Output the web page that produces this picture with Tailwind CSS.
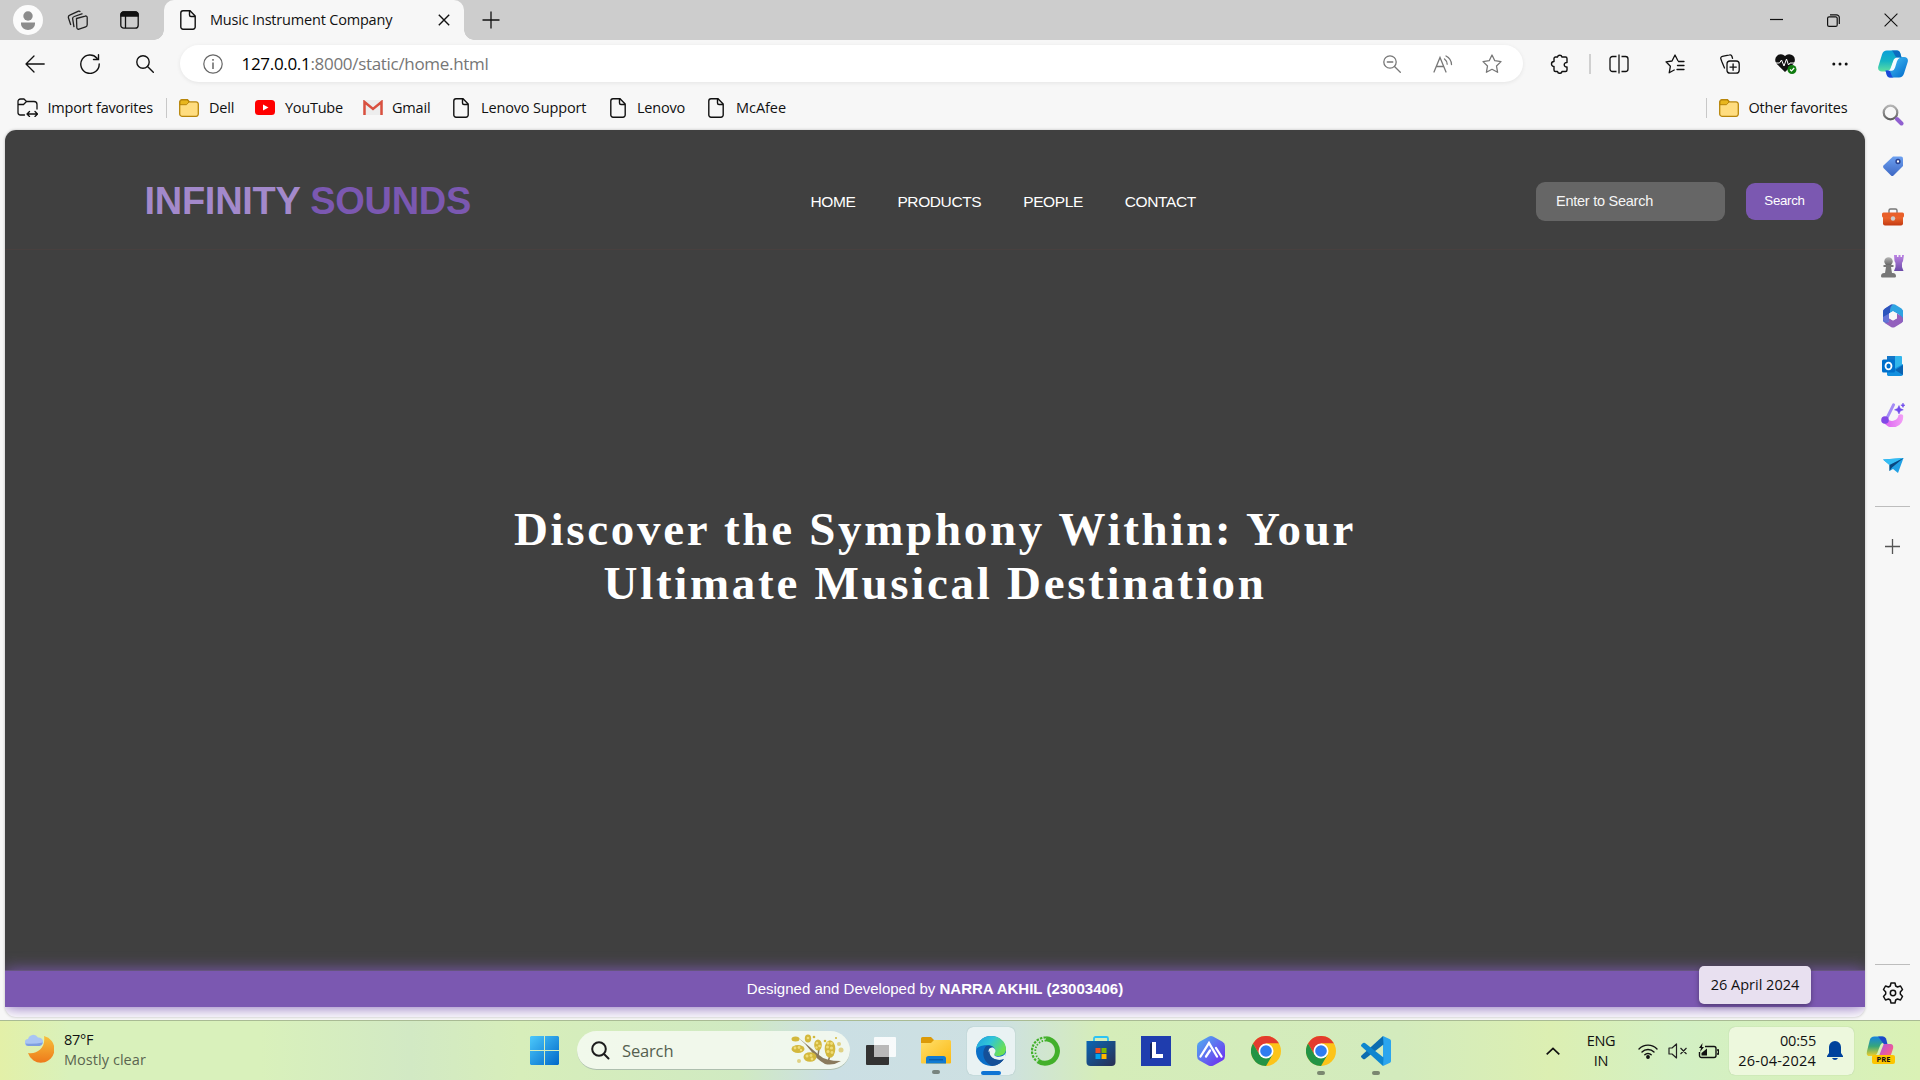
<!DOCTYPE html>
<html lang="en">
<head>
<meta charset="utf-8">
<title>Music Instrument Company</title>
<script src="https://cdn.jsdelivr.net/npm/@tailwindcss/browser@4"></script>
</head>
<body class="w-[1920px] h-[1080px] overflow-hidden bg-[#f7f7f7] font-['Open_Sans',sans-serif] text-[#111] flex flex-col">
<svg class="absolute size-0">
  <defs>
    <linearGradient id="blue" x1="0" y1="0" x2="1" y2="1"><stop offset="0" stop-color="#4cc9fb"/><stop offset="1" stop-color="#0068c9"/></linearGradient>
    <linearGradient id="purple" x1="0" y1="0" x2="0" y2="1"><stop offset="0" stop-color="#bd84e4"/><stop offset="1" stop-color="#6b4ba8"/></linearGradient>
    <linearGradient id="grey" x1="0" y1="0" x2="0" y2="1"><stop offset="0" stop-color="#b5b5b5"/><stop offset="1" stop-color="#606060"/></linearGradient>
    <linearGradient id="tag" x1="0" y1="0" x2="0" y2="1"><stop offset="0" stop-color="#6ca0f0"/><stop offset="1" stop-color="#3e68c4"/></linearGradient>
    <linearGradient id="red" x1="0" y1="0" x2="0" y2="1"><stop offset="0" stop-color="#ee6a30"/><stop offset="1" stop-color="#c43a12"/></linearGradient>
    <linearGradient id="moon" x1="0" y1="0" x2="0" y2="1"><stop offset="0" stop-color="#f7c13b"/><stop offset="1" stop-color="#ee7a1b"/></linearGradient>
    <linearGradient id="teal" x1="0" y1="0" x2="0" y2="1"><stop offset="0" stop-color="#0a9fd8"/><stop offset=".5" stop-color="#15b4c4"/><stop offset="1" stop-color="#5fe0a0"/></linearGradient>
    <linearGradient id="pink" x1="0" y1="0" x2="1" y2="0"><stop offset="0" stop-color="#d85cf0"/><stop offset="1" stop-color="#f3a0f6"/></linearGradient>
    <linearGradient id="edge" x1="0" y1="0" x2="1" y2=".5"><stop offset="0" stop-color="#1f9fe0"/><stop offset=".5" stop-color="#30c5d8"/><stop offset="1" stop-color="#6be052"/></linearGradient>
    <linearGradient id="file" x1="0" y1="0" x2="1" y2="1"><stop offset="0" stop-color="#ffdf6b"/><stop offset="1" stop-color="#fbb913"/></linearGradient>
    <linearGradient id="bag" x1="0" y1="0" x2="1" y2="1"><stop offset="0" stop-color="#0a66b4"/><stop offset="1" stop-color="#2a2f52"/></linearGradient>
    <linearGradient id="hex" x1="0" y1="0" x2="1" y2="1"><stop offset="0" stop-color="#4fb4f0"/><stop offset="1" stop-color="#7024f0"/></linearGradient>
    <linearGradient id="rain" x1="0" y1="0" x2="0" y2="1"><stop offset="0" stop-color="#1683e0"/><stop offset=".5" stop-color="#37a67a"/><stop offset="1" stop-color="#f2cf2a"/></linearGradient>
    <linearGradient id="sun" x1="0" y1="0" x2="1" y2="1"><stop offset="0" stop-color="#a455e8"/><stop offset=".6" stop-color="#ee5a9a"/><stop offset="1" stop-color="#fb8a4a"/></linearGradient>
    <symbol id="doc" viewBox="0 0 16 20"><path d="M3 .8h7L15.200 6v11a2.200 2.200 0 0 1-2.200 2.200H3A2.200 2.200 0 0 1 .8 17V3A2.200 2.200 0 0 1 3 .8zM9.500 1v4A1.500 1.500 0 0 0 11 6.500h4" fill="none" stroke="#111" stroke-width="1.400"/></symbol>
    <symbol id="folder" viewBox="0 0 20 18"><path d="M.7 3v12A2.200 2.200 0 0 0 3 17.300h14a2.200 2.200 0 0 0 2.300-2.200V5A2.200 2.200 0 0 0 17 2.900h-6.500L8.500.7H3A2.200 2.200 0 0 0 .7 3z" fill="#ffdd80" stroke="#b8860b" stroke-width="1.300"/><path d="M1 5.700h6.500L10 3 8.200 1H3A2 2 0 0 0 1 3z" fill="#e8b61e" stroke="#b8860b"/></symbol>
    <symbol id="chrome" viewBox="0 0 30 30"><circle cx="15" cy="15" r="15" fill="#fcc419"/><path d="M2 7.500A15 15 0 0 1 28 7.500H15L8.500 18.800z" fill="#e33b2e"/><path d="M2 7.500A15 15 0 0 0 15 30l6.500-11.200H8.500z" fill="#239445"/><path d="M15 7.500h13L21.500 18.800z" fill="#fcc419"/><circle cx="15" cy="15" r="7.500" fill="#fff"/><circle cx="15" cy="15" r="5.800" fill="#2f7cf0"/></symbol>
  </defs>
</svg>

<!-- Tab strip -->
<header class="h-10 shrink-0 bg-[#cdcdcd] flex items-center">
  <div class="w-[164px] h-10 flex items-center pl-[13px] shrink-0">
    <svg class="size-[30px]" viewBox="0 0 30 30"><circle cx="15" cy="15" r="15" fill="#fbfbfb"/><circle cx="15" cy="11" r="4.700" fill="#8c8c8c"/><path d="M8 17.500h14v1.500a7 6 0 0 1-14 0z" fill="#8c8c8c"/></svg>
    <svg class="ml-6 w-[21px] h-5" viewBox="0 0 21 20" fill="none" stroke="#222" stroke-width="1.300" stroke-linejoin="round"><path d="m9.500 8.500 8.700-2.400a1.500 1.500 0 0 1 2 1.400v7.300a2.200 2.200 0 0 1-1.500 2L12 19.100a1.600 1.600 0 0 1-2.200-1.500zM7 17.200l-1.300-8A2.300 2.300 0 0 1 7.300 6.500L15.500 3.600M3.800 15l-2.300-7A2.300 2.300 0 0 1 2.800 5.200L11.500 1.200a1.500 1.500 0 0 1 1.800.6"/></svg>
    <svg class="ml-8 w-[19px] h-[18px]" viewBox="0 0 19 18" fill="none" stroke="#111" stroke-width="1.300"><rect x=".8" y=".8" width="17.400" height="16.400" rx="3"/><path d="M1 5V3.500A2.500 2.500 0 0 1 3.500 1h12A2.500 2.500 0 0 1 18 3.500V5z" fill="#111"/><path d="M5.500 5v12"/></svg>
  </div>
  <div class="relative w-[300px] h-10 bg-[#f7f7f7] rounded-t-[10px] flex items-center pl-4 shrink-0">
    <span class="absolute right-full bottom-0 size-[10px] bg-[radial-gradient(circle_at_0_0,#cdcdcd_9.5px,#f7f7f7_10px)]"></span>
    <span class="absolute left-full bottom-0 size-[10px] bg-[radial-gradient(circle_at_100%_0,#cdcdcd_9.5px,#f7f7f7_10px)]"></span>
    <svg class="w-4 h-5"><use href="#doc"/></svg>
    <span class="ml-[14px] w-[228px] text-[14.5px] tracking-[-0.19px] whitespace-nowrap">Music Instrument Company</span>
    <svg class="w-3 h-3" viewBox="0 0 12 12" stroke="#111" stroke-width="1.400"><path d="M.8.8l10.400 10.400M11.200.8.8 11.200"/></svg>
  </div>
  <svg class="ml-[18px] size-[18px]" viewBox="0 0 18 18" stroke="#111" stroke-width="1.300"><path d="M9 .5v17M.5 9h17"/></svg>
  <div class="ml-auto pr-[22px] flex items-center">
    <svg class="w-[13px] h-3" viewBox="0 0 13 12" stroke="#111" stroke-width="1.200"><path d="M0 5.500h13"/></svg>
    <svg class="ml-11 w-[13px] h-[13px]" viewBox="0 0 13 13" fill="none" stroke="#111" stroke-width="1.200"><rect x=".6" y="2.800" width="9.600" height="9.600" rx="1.500"/><path d="M3 .8h6.500a2.800 2.800 0 0 1 2.800 2.800V10"/></svg>
    <svg class="ml-11 w-[14px] h-[14px]" viewBox="0 0 14 14" stroke="#111" stroke-width="1.100"><path d="M.6.6l12.800 12.800M13.400.6.6 13.400"/></svg>
  </div>
</header>

<!-- Toolbar -->
<div class="h-[47px] shrink-0 flex items-center">
  <div class="w-[180px] flex items-center pl-[25px] shrink-0">
    <svg class="w-5 h-[18px]" viewBox="0 0 20 18" fill="none" stroke="#111" stroke-width="1.300" stroke-linecap="round" stroke-linejoin="round"><path d="M19.200 9H1M9 1 1 9l8 8"/></svg>
    <svg class="ml-[35px] size-5" viewBox="0 0 20 20" fill="none" stroke="#111" stroke-width="1.400" stroke-linecap="round"><path d="M19.200 10A9.200 9.200 0 1 1 17 4.200M18.500.8v4.700h-5"/></svg>
    <svg class="ml-[36px] size-[18px]" viewBox="0 0 18 18" fill="none" stroke="#111" stroke-width="1.400" stroke-linecap="round"><circle cx="7" cy="7" r="6.200"/><path d="m11.500 11.500 5.800 5.800"/></svg>
  </div>
  <div class="w-[1343px] h-[37px] bg-white rounded-full shadow-[0_1px_4px_rgba(0,0,0,.08)] flex items-center pl-[22.5px] shrink-0">
    <svg class="size-5 shrink-0" viewBox="0 0 20 20" fill="none" stroke="#666" stroke-width="1.200"><circle cx="10" cy="10" r="9.200"/><path d="M10 8.500V15M10 5v1.800" stroke-width="1.500"/></svg>
    <span class="ml-[19px] w-[1141.5px] text-[17px] tracking-[-0.31px] whitespace-nowrap text-[#767676]"><span class="text-black">127.0.0.1</span>:8000/static/home.html</span>
    <svg class="size-[18px]" viewBox="0 0 18 18" fill="none" stroke="#777" stroke-width="1.300" stroke-linecap="round"><circle cx="7" cy="7" r="6.200"/><path d="m11.500 11.500 5.800 5.800M4.300 7h5.500"/></svg>
    <svg class="ml-[31.5px] w-5 h-[18px]" viewBox="0 0 20 18" fill="none" stroke="#777" stroke-width="1.300" stroke-linecap="round"><path d="m1 17 6-14.500L13 17M3.300 11.500h7.500M11.500 4a7 7 0 0 1 2.700 5.200M13 1a10 10 0 0 1 5.500 8.500"/></svg>
    <svg class="ml-[29px] size-5" viewBox="0 0 20 20" fill="none" stroke="#777" stroke-width="1.300" stroke-linejoin="round"><path d="m10 1 2.800 5.700 6.200.9-4.500 4.400 1.100 6.300-5.600-3-5.600 3L5.500 12 1 7.600l6.200-.9z"/></svg>
  </div>
  <div class="flex items-center pl-[27px] grow">
    <svg class="w-[18px] h-5 shrink-0" viewBox="0 0 18 20" fill="none" stroke="#111" stroke-width="1.400" stroke-linejoin="round"><path d="M5.500 3h2a2.300 2.300 0 0 1 4.500 0h3.500A1.500 1.500 0 0 1 17 4.500v4a2.300 2.300 0 1 0 0 4.500v3a1.500 1.500 0 0 1-1.500 1.500H12a2.300 2.300 0 0 1-4.500 0h-2A1.500 1.500 0 0 1 4 16v-3.500a2.500 2.500 0 1 1 0-5v-3A1.500 1.500 0 0 1 5.500 3z"/></svg>
    <span class="ml-[21px] w-[2px] h-5 bg-[#d0d0d0] shrink-0"></span>
    <svg class="ml-[18px] w-5 h-5 shrink-0" viewBox="0 0 20 20" fill="none" stroke="#111" stroke-width="1.300"><path d="M7.500 2.500H3.500a2.500 2.500 0 0 0-2.500 2.500v10A2.500 2.500 0 0 0 3.500 17.500h4M12.500 2.500h4A2.500 2.500 0 0 1 19 5v10a2.500 2.500 0 0 1-2.500 2.500h-4M10 .5v19"/></svg>
    <svg class="ml-9 w-5 h-5 shrink-0" viewBox="0 0 20 20" fill="none" stroke="#111" stroke-width="1.300" stroke-linecap="round" stroke-linejoin="round"><path d="M12.800 6.500 10 1 7 7l-6 .8 4.400 4.400L4.200 18.800l5-2.800M13.500 7.500H19M12.500 11.500H19M12 15.500h7"/></svg>
    <svg class="ml-[35px] w-5 h-5 shrink-0" viewBox="0 0 20 20" fill="none" stroke="#111" stroke-width="1.300" stroke-linecap="round"><rect x="7" y="7" width="12.200" height="12.200" rx="3"/><path d="M13.100 10v6.300M10 13.100h6.300M4.500 14 2 8 .9 5a2 2 0 0 1 1.500-2.700L9.500.9a2 2 0 0 1 2.400 1.400l.6 2"/></svg>
    <svg class="ml-[35px] w-[22px] h-[21px] shrink-0" viewBox="0 0 22 21"><path d="M10 19 1.800 11A5.500 5.500 0 0 1 10 3a5.500 5.500 0 0 1 8.300 8z" fill="#111"/><path d="M0 10h4.500l2-3 2.500 6 2.500-7 2 6 1.500-2H20" fill="none" stroke="#fff" stroke-width="1"/><circle cx="17" cy="16.500" r="4.500" fill="#107c10"/><path d="m15 16.500 1.500 1.500 2.700-3" fill="none" stroke="#fff" stroke-width="1.200"/></svg>
    <svg class="ml-[35px] w-4 h-4 shrink-0" viewBox="0 0 16 16" fill="#111"><circle cx="1.800" cy="8" r="1.500"/><circle cx="8" cy="8" r="1.500"/><circle cx="14.200" cy="8" r="1.500"/></svg>
    <svg class="ml-[30px] w-[30px] h-[28px] shrink-0" viewBox="0 0 30 27"><path d="M9 0h10c2 0 3 1.500 3.500 3.500L23.500 7H20c-3 0-4 1-5 4l-2.500 7c-1 2-2 3-4 3H4c-3 0-4.500-2-3.700-5L4 4C4.800 1.500 6.500 0 9 0z" fill="url(#teal)"/><path d="M21 27H12c-2 0-3-1.500-3.500-3.500L7.500 20H10c3 0 4-1 5-4l2.500-7c.6-2 2-2.500 4-2.500H26c3 0 4.500 2 3.700 5L26 23c-.8 2.500-2.500 4-5 4z" fill="url(#blue)"/><path d="M13 0h6c2 0 3 1.500 3.500 3.500l1 3.500h-4c-3 0-3.500-7-6.500-7z" fill="#0b6cc0"/><path d="M7.500 20H11c2 0 2 7 5 7h-4c-2 0-3-1.500-3.500-3.500z" fill="#1b49d8"/><path d="M19.500 7.200q-3 .3-4 3.800l-2.500 7q-1 2-3 2.200h4q2 0 3-3l2-6.500q.7-2.500 3-3.500z" fill="#f4fbff"/></svg>
  </div>
</div>

<div class="flex h-[933px] shrink-0">
  <div class="w-[1866px] flex flex-col">
    <!-- Favorites bar -->
    <nav class="h-[43px] shrink-0 flex items-center pl-[17px] pb-[2px] text-[14.5px] tracking-[-0.2px] whitespace-nowrap">
      <svg class="w-[21px] h-[19px]" viewBox="0 0 21 19" fill="none" stroke="#111" stroke-width="1.300" stroke-linecap="round" stroke-linejoin="round"><path d="M7.500 17H3.500A2.500 2.500 0 0 1 1 14.500V3.500A2.500 2.500 0 0 1 3.500 1H7l2.500 2.500H17A3 3 0 0 1 20 6.500V11M1 6.500h5.500l3-3M10 16h10.500M12.500 13.500 10 16l2.500 2.500M18 13.500l2.500 2.500-2.500 2.500"/></svg>
      <span class="ml-[9.5px] w-[118.5px]">Import favorites</span>
      <span class="w-px h-5 bg-[#c8c8c8]"></span>
      <svg class="ml-3 w-5 h-[18px]"><use href="#folder"/></svg><span class="ml-[10px] w-[46px]">Dell</span>
      <svg class="w-5 h-[15px]" viewBox="0 0 20 15"><rect width="20" height="15" rx="3.500" fill="#f00"/><path d="m8 4.500 5.500 3L8 10.500z" fill="#fff"/></svg><span class="ml-[10px] w-[78px] tracking-[-0.25px]">YouTube</span>
      <svg class="w-5 h-[15px]" viewBox="0 0 20 15"><rect width="20" height="15" rx="1" fill="#ededed"/><path d="M1.500 15V2L10 9l8.500-7v13" fill="none" stroke="#d9503f" stroke-width="2.500"/></svg><span class="ml-[9px] w-[61px]">Gmail</span>
      <svg class="w-4 h-5"><use href="#doc"/></svg><span class="ml-3 w-[129px] tracking-[-0.15px]">Lenovo Support</span>
      <svg class="w-4 h-5"><use href="#doc"/></svg><span class="ml-[11px] w-[71px]">Lenovo</span>
      <svg class="w-4 h-5"><use href="#doc"/></svg><span class="ml-3 tracking-[-0.05px]">McAfee</span>
      <span class="ml-auto w-px h-5 bg-[#c8c8c8]"></span>
      <svg class="ml-3 w-5 h-[18px]"><use href="#folder"/></svg><span class="ml-[9.5px] w-[117.5px]">Other favorites</span>
    </nav>

    <!-- Page -->
    <div class="ml-[5px] w-[1860px] h-[887px] rounded-[11px] overflow-hidden shadow-[0_0_3px_rgba(0,0,0,.25)] bg-white flex flex-col font-['Liberation_Sans',Arial,sans-serif] text-white">
      <div class="h-[840px] shrink-0 bg-[#404040] flex flex-col">
        <div class="h-[120px] shrink-0 border-b border-[#48403f] flex items-center pt-6">
          <div class="w-[805.5px] pl-[139.5px] pb-[2px] text-[38px] leading-none font-bold tracking-[-0.28px] text-[#7b58b1] whitespace-nowrap"><span class="text-[#a389cb]">INFINITY</span> SOUNDS</div>
          <div class="w-[725.5px] flex gap-[42px] text-[15.5px] tracking-[-0.4px]"><span>HOME</span><span>PRODUCTS</span><span>PEOPLE</span><span>CONTACT</span></div>
          <div class="w-[189px] h-[39px] rounded-[9px] bg-[#666] pl-5 flex items-center text-[14.5px] tracking-[-0.25px] text-[#f5f5f5]">Enter to Search</div>
          <div class="ml-[21px] w-[77px] h-[37px] rounded-[9px] bg-[#7b58b1] flex items-center justify-center pb-px text-[13.3px] tracking-[-0.3px]">Search</div>
        </div>
        <h1 class="mt-[252px] mx-auto w-[864px] text-center font-['Liberation_Serif','Times_New_Roman',serif] font-bold text-[47px] leading-[54px] tracking-[2.7px]">Discover the Symphony Within: Your Ultimate Musical Destination</h1>
      </div>
      <footer class="h-[37px] shrink-0 bg-[#7b58b1] shadow-[0_0_16px_#7b58b1] border-t border-[#66557f] pt-px flex items-center justify-center text-[15px] whitespace-pre">Designed and Developed by <b>NARRA AKHIL (23003406)</b></footer>
    </div>
  </div>

  <!-- Sidebar -->
  <aside class="w-[53px] flex flex-col items-center pt-[17px]">
    <svg class="size-[22px]" viewBox="0 0 22 22"><circle cx="8.500" cy="8.500" r="6.800" fill="none" stroke="url(#grey)" stroke-width="2.200"/><path d="m15 15 4.500 4.500" stroke="#9060d0" stroke-width="4" stroke-linecap="round"/></svg>
    <svg class="mt-[29px] size-[22px]" viewBox="0 0 22 22"><path d="M11 1.500h8a2 2 0 0 1 2 2v7.500L11.500 20.500a2 2 0 0 1-2.500 0L1.500 13a2 2 0 0 1 0-2.500z" fill="url(#tag)"/><circle cx="16" cy="6.500" r="1.900" fill="#fff" stroke="#2b4390" stroke-width="1.500"/></svg>
    <svg class="mt-[29px] w-[22px] h-[22px]" viewBox="0 0 22 22"><path d="M7 7V4.500A1.500 1.500 0 0 1 8.500 3h5A1.500 1.500 0 0 1 15 4.500V7" fill="none" stroke="#777" stroke-width="1.400"/><path d="M1 11h20v6.500a2 2 0 0 1-2 2H3a2 2 0 0 1-2-2z" fill="url(#red)"/><rect y="6.500" width="22" height="5" rx="1.500" fill="#e9602a"/><circle cx="11" cy="12.500" r="2.200" fill="#ccc"/></svg>
    <svg class="mt-[27px] w-[23px] h-[23px]" viewBox="0 0 23 23"><path d="M13 0h3v2h1.500V0h2v2H21V0h2l-1 6-1 2v4l1.500 4H13l1.500-4V8L13.500 6z" fill="url(#purple)"/><circle cx="7.500" cy="6.500" r="4.200" fill="url(#grey)"/><path d="M2.500 10h10v2H10l1 6H4l1-6H2.500zM0 21c0-2 1.500-3 3-3h9c1.500 0 3 1 3 3 0 1-.7 1.500-1.500 1.500h-12C.7 22.500 0 22 0 21z" fill="#777"/></svg>
    <svg class="mt-[26px] w-[22px] h-[24px]" viewBox="0 0 22 24"><path d="M11 2.500 19.500 7.200v9.600L11 21.500 2.500 16.800V7.200z" fill="none" stroke="#4a6fd0" stroke-width="3" stroke-linejoin="round"/><path d="M1 8q0-2.300 2-3.500L9.500.8Q8 3 8 6v3l-1 1v4.500l2 1.500-2 1.500q-3 1.500-5-.5-1-1-1-2.500z" fill="#6673d6"/><path d="M8 6q0-4 3-5.700 1-.3 2 .3l6.500 3.900Q21 5.500 21 8v8q0-3-2-4l-4-2.500L11 7.300 8 9z" fill="#2fa4e2"/><path d="m8 6q0-3.500 3-5.700-1-.3-2 .3L3 4.400Q1 5.500 1 8v5l7-4z" fill="#2d55bd"/><path d="M7 14.200 11 16.500l4-2.300V9.600l4 2.400q2 1.200 2 3.500 0 2.500-1.500 3.500L13 22.900q-2 1.200-4 0l-7-4.400q3 .8 5-.5z" fill="#9360bd"/><path d="m11 7.300 4 2.300v4.600l-4 2.300-4-2.300V9.600z" fill="#f7f7f7"/></svg>
    <svg class="mt-[27px] w-[21px] h-[22px]" viewBox="0 0 21 22"><rect x="5" y="1" width="15" height="16" rx="1" fill="#31b6ed"/><path d="M5 1h8v6H5z" fill="#1477c8"/><path d="M5 20V9l7 5 9-5v10a2 2 0 0 1-2 2H6z" fill="#1490df"/><path d="m21 10-8 5 8 5z" fill="#0b63b2"/><rect y="4.500" width="13" height="13" rx="1.500" fill="#0070cc"/><ellipse cx="6.500" cy="11" rx="3" ry="3.400" fill="none" stroke="#fff" stroke-width="1.800"/></svg>
    <svg class="mt-[26px] w-[24px] h-[24px]" viewBox="0 0 24 24"><path d="M22 12a10.500 10.500 0 0 1-20 6l5-1.500A6.500 6.500 0 0 0 17.500 12q2.500-1.500 4.500 0z" fill="url(#pink)"/><path d="m12.500 1.800-6 12" stroke="#a48bf6" stroke-width="3" stroke-linecap="round"/><circle cx="4" cy="17" r="3.800" fill="#8248e6"/><path d="m18 2.500 1.300 3 3 1.300-3 1.300L18 11l-1.500-2.900-3-1.300 3-1.300zM22 0l.7 1.700 1.300.5-1.300.7L22 4.500l-.8-1.600-1.400-.7 1.400-.5z" fill="#704cec" stroke="#704cec" stroke-width=".5"/></svg>
    <svg class="mt-[27px] w-[22px] h-[22px]" viewBox="0 0 22 22"><path d="M1 5.500 21.500 4l-5.500 15-5-4-3.500 2v-6z" fill="#20a0e4"/><path d="M21.500 4 7.500 11 1 5.500z" fill="#34bdf4"/><path d="M21.500 4 7.500 11v6l2.500-3.500z" fill="#09477f"/></svg>
    <span class="mt-[30px] w-[35px] h-px bg-[#bdbdbd]"></span>
    <svg class="mt-[32px] size-[15px]" viewBox="0 0 15 15" stroke="#555" stroke-width="1.300"><path d="M7.500 0v15M0 7.500h15"/></svg>
    <span class="mt-auto w-[35px] h-px bg-[#bdbdbd]"></span>
    <svg class="mt-[17px] mb-[16px] size-[22px]" viewBox="0 0 22 22" fill="none" stroke="#111" stroke-width="1.500" stroke-linejoin="round"><path d="M9 1h4l.7 3 1.800 1 3-1 2 3.500L18.300 10v2l2.200 2.500-2 3.500-3-1-1.800 1-.7 3H9l-.7-3-1.800-1-3 1-2-3.500L3.700 12v-2L1.500 7.500l2-3.500 3 1 1.800-1z"/><circle cx="11" cy="11" r="2.700"/></svg>
  </aside>
</div>

<!-- Taskbar -->
<div class="relative h-[60px] shrink-0 border-t border-[#a9bb94] bg-[linear-gradient(90deg,#e3f0a8_0px,#d9f1bb_70px,#d9f1bb_260px,#d2e9c4_410px,#d7eeba_520px,#d0eac2_740px,#cbdfe4_830px,#cde0e2_1000px,#d5edb9_1100px,#d3ebbd_1400px,#dcefb2_1550px,#d3f0c4_1680px,#daf1b5_1920px)] flex items-center">
  <div class="w-[530px] pl-[25px] flex items-center pb-[2px]">
    <svg class="w-[29px] h-[29px] mb-[2px]" viewBox="0 0 29 29"><path d="M19 2A13.500 13.500 0 1 1 3 19c9 1.500 18-5 16-17z" fill="url(#moon)"/><path d="M3.500 12a3.500 3.500 0 0 1-.5-7A5.500 5.500 0 0 1 13 3.500a4.300 4.300 0 0 1 1.500 8.500z" fill="#a9c5f3"/><path d="M.5 9.500q8 1 17.500-1-1 3-3.500 3.500h-11Q1 12 .5 9.500z" fill="#7e9fe0"/></svg>
    <div class="ml-[10px] text-[14.5px] leading-5 whitespace-nowrap"><div class="tracking-[-0.3px]">87°F</div><div class="text-[#5b6550] tracking-[0.05px]">Mostly clear</div></div>
  </div>
  <svg class="size-[29px] shrink-0" viewBox="0 0 29 29" fill="url(#blue)"><path d="M1 0h13v14H0V1zM15 0h13l1 1v13H15zM0 15h14v14H1l-1-1zM15 15h14v13l-1 1H15z"/></svg>
  <div class="ml-[18px] w-[273px] h-[39px] shrink-0 rounded-full bg-[#f4faf0]/90 border-b border-[#aebfae] flex items-center pl-[14px]">
    <svg class="size-[19px]" viewBox="0 0 19 19" fill="none" stroke="#1c1c1c" stroke-width="2" stroke-linecap="round"><circle cx="8" cy="8" r="6.800"/><path d="m13 13 4.500 4.500"/></svg>
    <span class="ml-3 w-[169px] pt-[2px] text-[16.5px] text-[#55604f] tracking-[-0.15px]">Search</span>
    <svg class="w-[54px] h-8" viewBox="0 0 54 32"><path d="M7 3.500Q18 12 28 21q6 6 22 6-8 5-16 3-9-5-14-13-6-8-13-13.500z" fill="#8a7a5c"/><path d="m28 14-1 8M40 18l-3 10" stroke="#8a7a5c" stroke-width="1.500"/><g fill="#d3b83c"><ellipse cx="4.500" cy="5" rx="4" ry="2.500"/><ellipse cx="17" cy="4.500" rx="3.200" ry="4"/><ellipse cx="27" cy="11" rx="3.800" ry="5.500"/><ellipse cx="7" cy="15" rx="6.500" ry="4"/><ellipse cx="19" cy="23" rx="6.500" ry="4.800"/><ellipse cx="39" cy="15" rx="5.300" ry="8.800"/><circle cx="50" cy="16" r="2.500" opacity=".6"/><circle cx="48" cy="10" r="2" opacity=".6"/><circle cx="8" cy="27" r="2" opacity=".6"/><circle cx="23" cy="3" r="1.300"/><circle cx="34" cy="7" r="1.300"/><circle cx="45" cy="4" r="1"/></g><g fill="#efdc78"><circle cx="37" cy="9" r="1.500"/><circle cx="40.500" cy="9.500" r="1.400"/><circle cx="36.500" cy="13" r="1.500"/><circle cx="40.500" cy="14" r="1.600"/><circle cx="37" cy="17.500" r="1.500"/><circle cx="41" cy="18.500" r="1.400"/><circle cx="26" cy="9" r="1.300"/><circle cx="28.500" cy="12" r="1.300"/><circle cx="25.500" cy="13.500" r="1.200"/><circle cx="4" cy="14" r="1.400"/><circle cx="8" cy="13.500" r="1.400"/><circle cx="10" cy="16" r="1.200"/><circle cx="16" cy="22" r="1.500"/><circle cx="20" cy="21.500" r="1.400"/><circle cx="21" cy="25" r="1.400"/><circle cx="17" cy="4" r="1.300"/></g></svg>
  </div>
  <div class="ml-[3.5px] flex items-center shrink-0">
    <div class="w-[55px] flex justify-center"><svg class="w-[30px] h-7" viewBox="0 0 30 28"><rect y="8" width="23" height="20" rx="1" fill="#333"/><rect x="8" width="22" height="20" rx="1" fill="#fff" opacity=".85"/><path d="M8 8h15v12H8z" fill="#b9b9b9"/></svg></div>
    <div class="relative w-[55px] flex justify-center"><svg class="w-[30px] h-[27px]" viewBox="0 0 30 27"><path d="M0 1.500A1.500 1.500 0 0 1 1.500 0H10l3 3h15v6H0z" fill="#dc9a08"/><path d="M0 6h10l3-3h15.500A1.500 1.500 0 0 1 30 4.500v21a1 1 0 0 1-1 1H1a1 1 0 0 1-1-1z" fill="url(#file)"/><path d="M5 26.500v-5A2.500 2.500 0 0 1 7.500 19h15a2.500 2.500 0 0 1 2.500 2.500v5z" fill="#117bd2"/><path d="M8 22.800h14" stroke="#08539b"/></svg><span class="absolute top-[33px] w-2 h-1 rounded-full bg-[#78847f]"></span></div>
    <div class="w-[55px] flex justify-center"><div class="relative w-12 h-12 rounded-md bg-[#e9f2f3] shadow-[0_0_1px_#8aa] flex items-center justify-center"><svg class="size-[30px]" viewBox="0 0 30 30"><circle cx="15" cy="15" r="15" fill="#0a6fc8"/><path d="M0 13A15 15 0 0 1 15 0c9 0 15 6 15 13 0 5-4 7-8 7-3 0-5-1-4-3 3-4-1-8-6-8Q4 9 0 13z" fill="url(#edge)"/><path d="M10 10c-6 8-1 17 6 20 5 0 9-3 12-7-8 3-16-2-14-9q1-3 3-3-3-2-7-1z" fill="#155098"/><path d="M17 11.500c3 2 3 4 1.500 6-1 2 1 3.200 4 3.200 3.500 0 6-1.500 7.500-4L29 23c-8 3.500-19-2-16-10q1.500-2 4-1.500z" fill="#e9f2f3"/><path d="M28 23c-7 3-15-1-14.500-8-6 5-1 12 5 14q6-1 9.500-6z" fill="#155098"/></svg><span class="absolute bottom-0 w-5 h-1 rounded-full bg-[#0f74d4]"></span></div></div>
    <div class="w-[55px] flex justify-center"><svg class="size-[30px]" viewBox="0 0 30 30" fill="none" stroke="#42b02a"><path d="M15 2.700A12.300 12.300 0 1 1 7 25" stroke-width="5"/><path d="M15 1.500A13.500 13.500 0 0 0 6 25.500" stroke-width="2.200" stroke-dasharray="2.500 1.200"/><path d="M15 4.500A10.500 10.500 0 0 0 8 23" stroke-width="1.800" stroke-dasharray="1.500 1.500"/></svg></div>
    <div class="w-[55px] flex justify-center"><svg class="size-[30px]" viewBox="0 0 30 30"><path d="M8 6V2.500A1.500 1.500 0 0 1 9.500 1h11A1.500 1.500 0 0 1 22 2.500V6" fill="none" stroke="#2dc3f4" stroke-width="1.800"/><path d="M.5 5h29v21a4 4 0 0 1-4 4h-21a4 4 0 0 1-4-4z" fill="url(#bag)"/><path d="M9.500 12h5v5h-5z" fill="#f25022"/><path d="M15.500 12h5v5h-5z" fill="#7fba00"/><path d="M9.500 18h5v5h-5z" fill="#00a4ef"/><path d="M15.500 18h5v5h-5z" fill="#ffb900"/></svg></div>
    <div class="w-[55px] flex justify-center"><svg class="size-[30px]" viewBox="0 0 30 30"><path d="M0 0h30v30H0z" fill="#1f3dae"/><path d="m11 6-2 2v15l2-1z" fill="#12245f"/><path d="M11 6h4v12h7v4H11z" fill="#fff"/></svg></div>
    <div class="w-[55px] flex justify-center"><svg class="w-7 h-[30px]" viewBox="0 0 28 30"><path d="M11.500.7q2.500-1.300 5 0l9 5Q28 7 28 10v10q0 3-2.500 4.500l-9 5q-2.500 1.300-5 0l-9-5Q0 23 0 20V10q0-3 2.500-4.300z" fill="url(#hex)"/><path d="M3.500 20.500 12 7l8 13.500M9 20.500l4-6M19 12l5.500 8.500" fill="none" stroke="#fff" stroke-width="2.300" stroke-linecap="round"/></svg></div>
    <div class="w-[55px] flex justify-center"><svg class="size-[30px]"><use href="#chrome"/></svg></div>
    <div class="relative w-[55px] flex justify-center"><svg class="size-[30px]"><use href="#chrome"/></svg><span class="absolute top-[35px] w-2 h-1 rounded-full bg-[#7a8770]"></span></div>
    <div class="relative w-[55px] flex justify-center"><svg class="size-[30px]" viewBox="0 0 30 30"><path d="m22 0 7 3.300q1 .6 1 1.700v20q0 1.100-1 1.700L22 30z" fill="#2ba5ee"/><path d="m22 0 .5 8.500L4 23q-1 .7-2 0l-1.500-1.500q-1-1 0-2z" fill="#0b6cb0"/><path d="m22 30 .5-8.500L4 7Q3 6.300 2 7L.5 8.500q-1 1 0 2z" fill="#0d86cf"/></svg><span class="absolute top-[35px] w-2 h-1 rounded-full bg-[#7a8770]"></span></div>
  </div>
  <div class="absolute right-0 top-0 h-[59px] w-[374px] flex items-center text-[14.5px] leading-5 whitespace-nowrap">
    <svg class="w-[14px] h-2" viewBox="0 0 14 8" fill="none" stroke="#111" stroke-width="1.700"><path d="m.7 7.300 6.300-6 6.300 6"/></svg>
    <div class="ml-[26px] w-[30px] text-center tracking-[-0.3px]">ENG<br>IN</div>
    <svg class="ml-[22px] w-5 h-4" viewBox="0 0 20 16" fill="none" stroke="#111" stroke-width="1.400" stroke-linecap="round"><path d="M1 6a12.500 12.500 0 0 1 18 0M4 9a8.300 8.300 0 0 1 12 0M6.800 11.800a4.500 4.500 0 0 1 6.400 0"/><circle cx="10" cy="14" r="1.200" fill="#111"/></svg>
    <svg class="ml-[10px] w-5 h-4" viewBox="0 0 20 16" fill="none" stroke="#222" stroke-width="1.200" stroke-linejoin="round"><path d="M1 5h3l4.500-4v14L4 11H1zM12.500 5l6 6M18.500 5l-6 6"/></svg>
    <svg class="ml-[10px] w-[21px] h-4" viewBox="0 0 21 16" fill="none" stroke="#111" stroke-width="1.400"><path d="M7 3.500h9A2 2 0 0 1 18 5.500v7a2 2 0 0 1-2 2H3.500a2 2 0 0 1-2-2V9M19 7h1.500v4H19"/><path d="M3.500 12.500V10L9 5.500v7z" fill="#111" stroke="none"/><path d="M4.500 0 1 5h2l-1 4 4-5H4z" fill="#111" stroke="none"/></svg>
    <div class="ml-[10px] w-[125px] h-12 rounded-md bg-[#edf8dd] shadow-[0_0_1px_#9b8] flex items-center">
      <div class="w-[87px] text-right"><div class="tracking-[-0.2px]">00:55</div><div class="tracking-[0.2px]">26-04-2024</div></div>
      <svg class="ml-[11px] w-4 h-[19px]" viewBox="0 0 16 19" fill="#00439c"><path d="M8 0a6 6 0 0 1 6 6v6l2 3v1H0v-1l2-3V6a6 6 0 0 1 6-6zM5 17h6q-1 2-3 2t-3-2z"/></svg>
    </div>
    <div class="relative ml-3 w-[30px] h-[29px]">
      <svg class="w-7 h-7" viewBox="0 0 30 29"><path d="M9 0h8q3 0 4 4l1 3h-4q-2 0-3 3l-3 8q-1 3-4 3H4q-4 0-3-5L4 4q1-4 5-4z" fill="url(#rain)"/><path d="M13 0h5q3 0 4 4l1 4h-4z" fill="#1c49c8"/><path d="M19 8h7q4 0 3 5l-3 9q-1 4-5 4h-7q-2 0-1-3z" fill="url(#sun)"/></svg>
      <span class="absolute left-[6px] top-[19px] w-[23px] h-[9px] rounded-[2px] bg-[#fdc500] text-[7.5px] leading-[9px] font-bold text-center">PRE</span>
    </div>
  </div>
  <div class="absolute left-[1699px] -top-[55px] w-[112px] h-[38px] rounded-[5px] bg-[#e8e0f0] shadow-[0_2px_5px_rgba(0,0,0,.35)] flex items-center justify-center text-[14.5px] whitespace-nowrap">26 April 2024</div>
</div>
</body>
</html>
